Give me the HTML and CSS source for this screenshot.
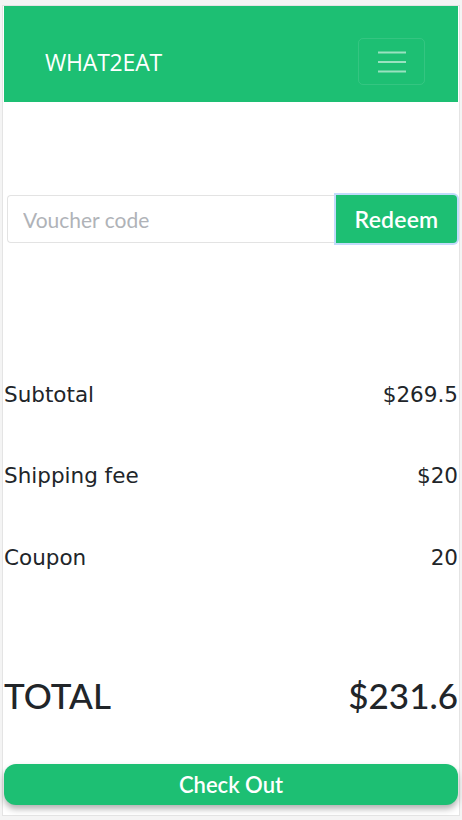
FILE: index.html
```html
<!DOCTYPE html>
<html lang="en">
<head>
<meta charset="utf-8">
<title>WHAT2EAT - Cart</title>
<link rel="stylesheet" href="styles.css">
</head>
<body>
<div class="page">
  <header class="navbar">
    <span class="brand">WHAT2EAT</span>
    <button class="toggler" aria-label="Menu">
      <svg width="30" height="30" viewBox="0 0 30 30"><path d="M1 5.5h28M1 15h28M1 24.5h28" stroke="rgba(255,255,255,0.55)" stroke-width="2.2"/></svg>
    </button>
  </header>

  <form class="voucher">
    <input class="voucher-input" type="text" placeholder="Voucher code">
    <button class="redeem" type="button">Redeem</button>
  </form>

  <div class="summary">
    <div class="row"><span>Subtotal</span><span>$269.5</span></div>
    <div class="row"><span>Shipping fee</span><span>$20</span></div>
    <div class="row"><span>Coupon</span><span>20</span></div>
  </div>

  <div class="total"><span>TOTAL</span><span>$231.6</span></div>

  <button class="checkout" type="button">Check Out</button>
</div>
</body>
</html>
```
FILE: styles.css
```css
* { box-sizing: border-box; }
html, body { margin: 0; padding: 0; }
body {
  background: #f4f4f4;
  font-family: "Lato", "Open Sans", sans-serif;
  color: #212529;
}
.page {
  margin: 5px 2px 4px 2px;
  height: 811px;
  background: #fff;
  border: 1px solid #e4e4e4;
  padding: 0 1px;
  display: flex;
  flex-direction: column;
}
.navbar {
  background: #1dbf73;
  height: 96px;
  display: flex;
  align-items: center;
  justify-content: space-between;
  padding: 15px 33px 0 41px;
}
.brand {
  font-family: "Open Sans", sans-serif;
  font-size: 23px;
  color: #fff;
  letter-spacing: -0.2px;
}
.toggler {
  width: 67px;
  height: 47px;
  background: transparent;
  border: 1px solid rgba(255,255,255,0.1);
  border-radius: 5px;
  display: flex;
  align-items: center;
  justify-content: center;
  padding: 0;
}
.voucher {
  display: flex;
  margin: 93px 1px 0 3px;
  height: 48px;
}
.voucher-input {
  flex: 1;
  border: 1px solid #e3e3e3;
  border-right: none;
  border-radius: 4px 0 0 4px;
  padding: 0 15px;
  font-family: "Lato", sans-serif;
  font-size: 21px;
  color: #333;
  outline: none;
}
.voucher-input::placeholder { color: #b0b3b8; }
.redeem {
  width: 121px;
  background: #1dbf73;
  color: #fff;
  border: none;
  border-radius: 0 4px 4px 0;
  box-shadow: 0 0 0 2px #c2dbfb;
  font-family: "Lato", sans-serif;
  font-weight: 600;
  font-size: 23px;
  letter-spacing: 0.2px;
  padding: 0;
}
.summary {
  margin-top: 136px;
  display: flex;
  flex-direction: column;
  gap: 51.5px;
}
.row, .total {
  display: flex;
  justify-content: space-between;
  align-items: center;
}
.row {
  height: 30px;
  font-family: "DejaVu Sans", sans-serif;
  font-size: 21.5px;
}
.total {
  margin-top: 101px;
  height: 44px;
  font-family: "Lato", sans-serif;
  font-weight: 500;
  font-size: 35px;
}
.checkout {
  margin-top: 47px;
  height: 41px;
  background: #1dbf73;
  color: #fff;
  border: none;
  border-radius: 12px;
  box-shadow: 0 4px 6px rgba(0,0,0,0.3);
  font-family: "Lato", sans-serif;
  font-weight: 600;
  font-size: 22px;
  padding: 0;
}
```
